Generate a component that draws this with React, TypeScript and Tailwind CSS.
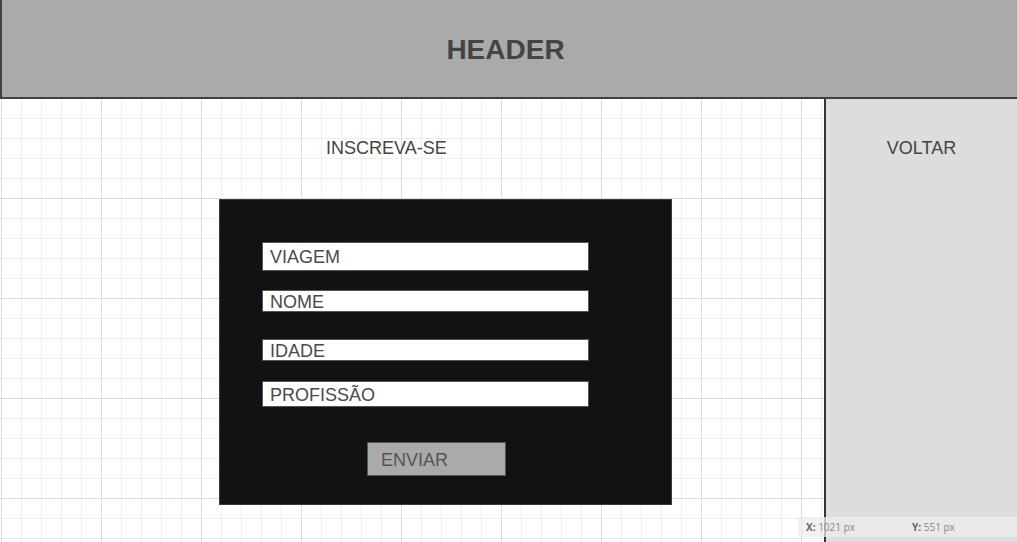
import React from "react";

// ──────────────────────────────────────────────────────────────
// Wireframe — sign-up page (header, form, back sidebar)
// ──────────────────────────────────────────────────────────────

const fields = [
  { label: "VIAGEM", box: "h-[29px]", gap: "mb-[19px]" },
  { label: "NOME", box: "h-[22px]", gap: "mb-[27px]" },
  { label: "IDADE", box: "h-[22px]", gap: "mb-[20px]" },
  { label: "PROFISSÃO", box: "h-[26px]", gap: "mb-[35px]" },
];

export default function App() {
  return (
    <div className="relative flex h-[542px] w-full flex-col overflow-hidden bg-white font-['Liberation_Sans',Arial,sans-serif] text-[#444]">
      {/* Header */}
      <header className="flex h-[99px] shrink-0 items-center justify-center border-b-2 border-l-2 border-[#404040] bg-[#aaaaaa] pr-[8px] pt-[3px]">
        <h1 className="text-[28px] font-bold leading-none text-[#444]">HEADER</h1>
      </header>

      <div className="flex flex-1">
        {/* Main grid canvas */}
        <main className="flex flex-1 flex-col bg-white pt-[39px] [background-image:linear-gradient(to_right,#dcdcdc_1px,transparent_1px),linear-gradient(to_bottom,#dcdcdc_1px,transparent_1px),linear-gradient(to_right,#eeeeee_1px,transparent_1px),linear-gradient(to_bottom,#eeeeee_1px,transparent_1px)] [background-position:1px_99px,1px_99px,1px_19px,1px_19px] [background-size:100px_100px,100px_100px,20px_20px,20px_20px]">
          <p className="ml-[326px] text-[18px] leading-[20px]">INSCREVA-SE</p>

          <div className="ml-[219px] mt-[41px] flex h-[306px] w-[453px] flex-col border border-[#3a3a3a] bg-[#121212] pl-[42px] pt-[42px]">
            {fields.map((f) => (
              <div
                key={f.label}
                className={`flex w-[327px] items-center border border-[#555] bg-white pl-[7px] pt-[1px] text-[18px] leading-none text-[#4a4a4a] ${f.box} ${f.gap}`}
              >
                {f.label}
              </div>
            ))}

            <button className="ml-[105px] flex h-[34px] w-[139px] items-center border border-[#555] bg-[#aaaaaa] pl-[13px] pt-[1px] text-[18px] leading-none text-[#555]">
              ENVIAR
            </button>
          </div>
        </main>

        {/* Sidebar */}
        <aside className="flex w-[193px] shrink-0 justify-center border-l-2 border-[#333] bg-[#dddddd] pt-[39px]">
          <span className="text-[18px] leading-[20px]">VOLTAR</span>
        </aside>
      </div>

      {/* Cursor coordinates bar */}
      <div className="absolute bottom-[5px] left-[798px] right-0 flex h-[20px] items-center bg-[#ececec]/75 pl-[8px] font-['Open_Sans',sans-serif] text-[10px] text-[#888]">
        <span className="w-[106px]">
          <b className="text-[#666]">X:</b> 1021 px
        </span>
        <span>
          <b className="text-[#666]">Y:</b> 551 px
        </span>
      </div>
    </div>
  );
}
